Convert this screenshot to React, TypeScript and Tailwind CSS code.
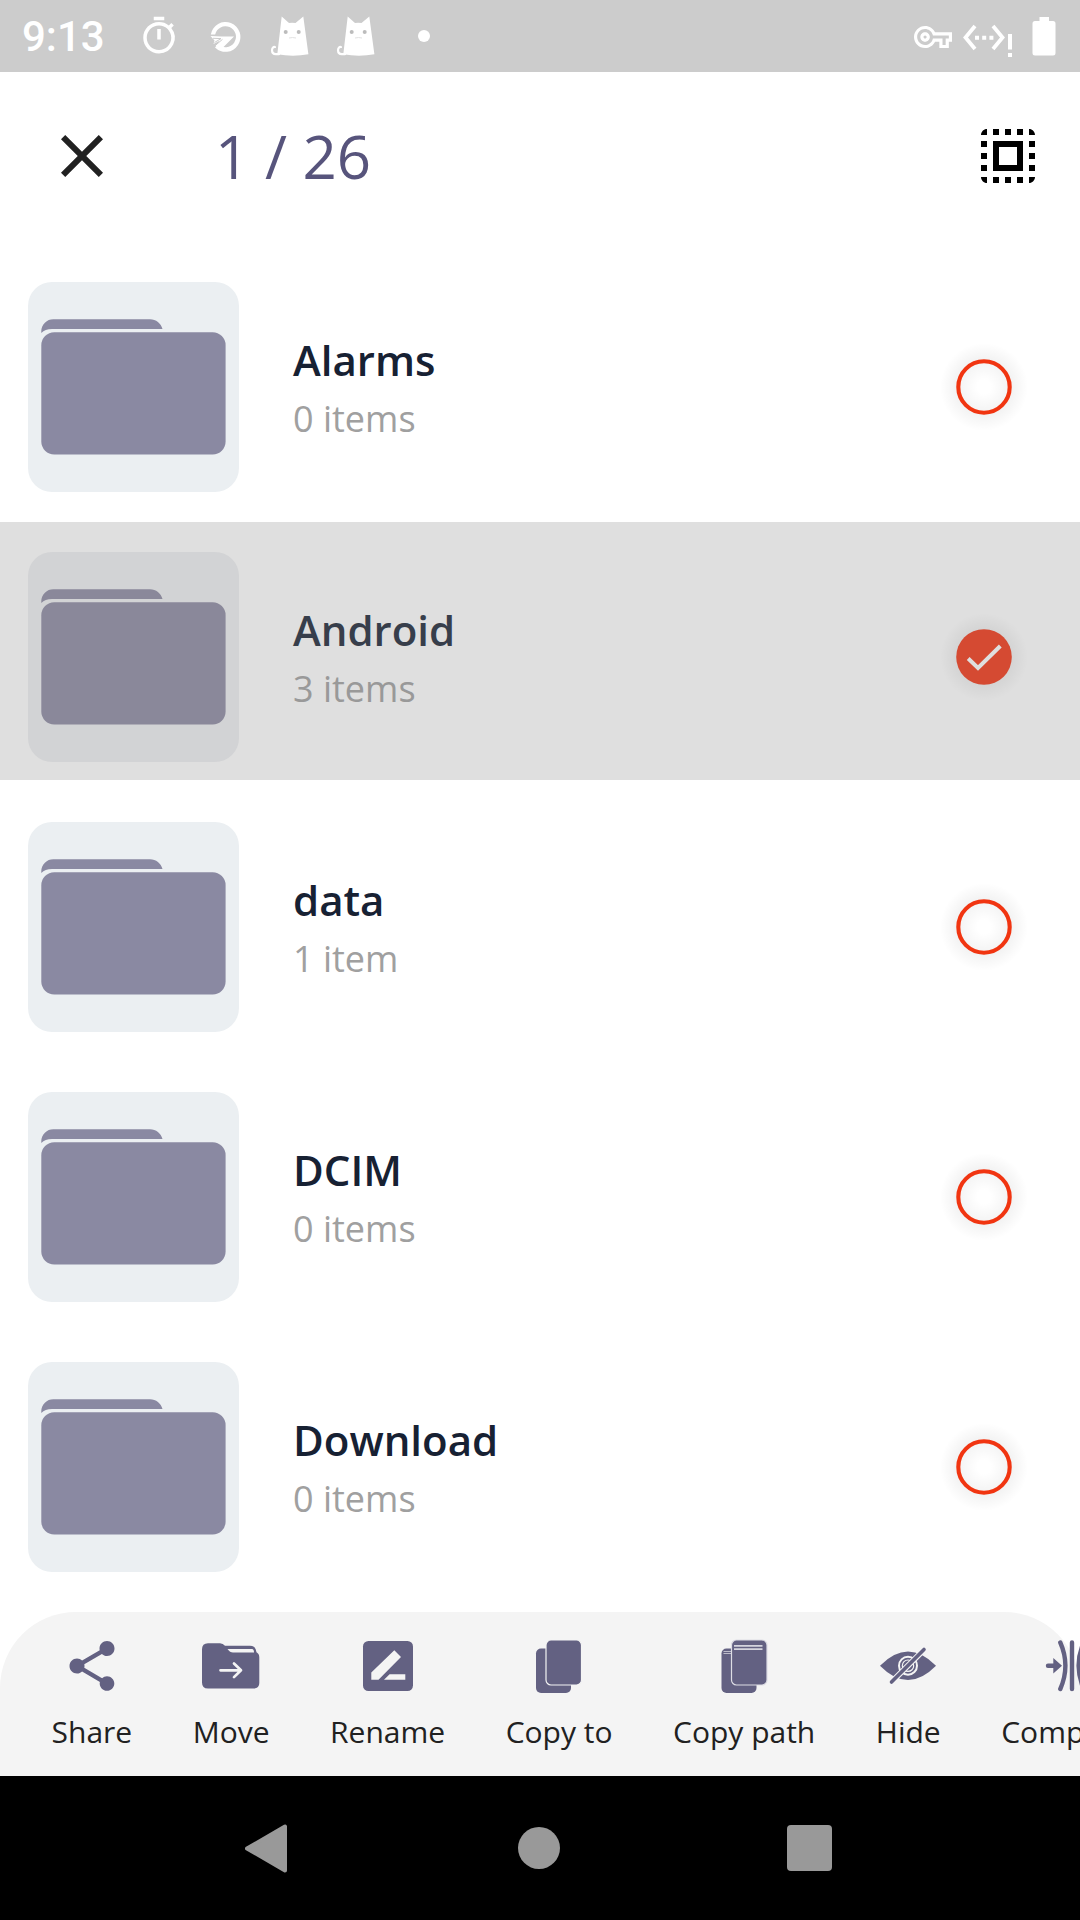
import type { ReactNode } from "react";
import { MdClose, MdSelectAll, MdShare, MdOutlineTimer, MdOutlineVpnKey } from "react-icons/md";

type Folder = { name: string; count: string; selected?: boolean };

const folders: Folder[] = [
  { name: "Alarms", count: "0 items" },
  { name: "Android", count: "3 items", selected: true },
  { name: "data", count: "1 item" },
  { name: "DCIM", count: "0 items" },
  { name: "Download", count: "0 items" },
];

function GlobeIcon() {
  return (
    <svg viewBox="0 0 34 34" className="h-[34px] w-[34px] shrink-0 text-white" fill="currentColor">
      <path d="M1.800 15.500A14.900 14.900 0 1 1 6 28.500l3-3.400A10.500 10.500 0 1 0 6.200 15.500Z" />
      <path d="M1.500 17 12.500 17.600h12.500L13.500 29 6.500 27l4.500-5.500-6.500 3.500 1-3.500Z" />
      <path d="M4 19.300 12 19.600 5.500 23.500M13.500 20.300 6.500 26.300" stroke="#ccc" strokeWidth="1" fill="none" />
    </svg>
  );
}

function CatIcon() {
  return (
    <svg viewBox="0 0 39 41" className="h-[41px] w-[39px] shrink-0">
      <path d="M11.700.6 19 7q3.200-.6 6.500 0L33.300.6 38.400 38.300Q23 41 7.300 38.300Z" fill="#fff" />
      <path d="M5 31C1 30.500.8 38 5.800 38.200H9" fill="none" stroke="#fff" strokeWidth="2.200" strokeLinecap="round" />
      <circle cx="15.700" cy="16" r="2" fill="#bcbcbc" />
      <circle cx="28.700" cy="16" r="2" fill="#bcbcbc" />
      <path d="M19 22q3.500-1 7 0" stroke="#e2e2e2" strokeWidth="1" fill="none" />
    </svg>
  );
}

function StatusBar() {
  return (
    <div className="flex h-[72px] shrink-0 items-center bg-[#cccccc] pl-[22px] text-white">
      <span className="mt-[2px] w-[116px] font-['Roboto'] text-[42px] leading-[72px] font-medium">9:13</span>
      <MdOutlineTimer className="h-[42px] w-[42px] shrink-0" />
      <div className="ml-[29px] flex items-center">
        <GlobeIcon />
      </div>
      <div className="ml-[27px] flex gap-[27px]">
        <CatIcon />
        <CatIcon />
      </div>
      <div className="ml-[43px] h-3 w-3 rounded-full bg-white" />
      <div className="mr-6 ml-auto flex items-center">
        <MdOutlineVpnKey className="mt-[2px] h-[38px] w-[38px]" />
        <svg viewBox="0 0 50 34" className="mt-[7px] ml-[10px] h-[34px] w-[50px]" fill="none">
          <path d="M13 3 3.500 14.500 13 26M31 3l9.500 11.500L31 26" stroke="#fff" strokeWidth="3.800" />
          <path d="M13 12.800h4v4h-4zM20.200 12.800h4v4h-4zM27.400 12.800h4v4h-4zM46 11h4v15.500h-4zM46 30h4v4h-4z" fill="#fff" />
        </svg>
        <svg viewBox="0 0 24 39" className="ml-[20px] h-[39px] w-6" fill="#fff">
          <path d="M7.500 0h9.500v4h4a2.500 2.500 0 0 1 2.500 2.500V36a2.500 2.500 0 0 1-2.500 2.500H3A2.500 2.500 0 0 1 .5 36V6.500A2.500 2.500 0 0 1 3 4h4.500Z" />
        </svg>
      </div>
    </div>
  );
}

function Header() {
  return (
    <header className="flex h-[168px] shrink-0 items-center px-9">
      <MdClose className="ml-[10px] h-[72px] w-[72px] text-[#212121]" />
      <h1 className="ml-[97px] text-[60px] leading-[82px] text-[#57547c]">1 / 26</h1>
      <MdSelectAll className="ml-auto h-[72px] w-[72px] text-black" />
    </header>
  );
}

function FolderTile({ selected }: { selected?: boolean }) {
  return (
    <div className={`h-[210px] w-[211px] rounded-[24px] ${selected ? "bg-[#d2d3d5]" : "bg-[#ebeff2]"}`}>
      <svg viewBox="0 0 211 210" className={`h-[210px] w-[211px] ${selected ? "text-[#8a889a]" : "text-[#8a89a2]"}`} fill="currentColor">
        <rect x="13.300" y="50.300" width="184.300" height="122.300" rx="13" />
        <path d="M13.300 51V49a12 12 0 0 1 12-11.700H122c6 0 11 4 12.500 9.700H24q-7 0-10.700 4Z" />
      </svg>
    </div>
  );
}

function SelectionMark({ selected }: { selected?: boolean }) {
  return (
    <svg viewBox="0 0 96 96" className="h-24 w-24">
      <defs>
        <radialGradient id={selected ? "halo-on" : "halo-off"}>
          <stop offset="0" stopColor="#000" stopOpacity="0" />
          <stop offset="0.150" stopColor="#000" stopOpacity="0" />
          <stop offset="0.620" stopColor="#000" stopOpacity="0.050" />
          <stop offset="1" stopColor="#000" stopOpacity="0" />
        </radialGradient>
      </defs>
      <circle cx="48" cy="48" r="44" fill={selected ? "url(#halo-on)" : "url(#halo-off)"} />
      {selected ? (
        <>
          <circle cx="48" cy="48" r="27.800" fill="#d54a32" />
          <path d="M32.200 49.500 42 59 64.300 37" fill="none" stroke="#dfdfdf" strokeWidth="4" strokeLinejoin="miter" />
        </>
      ) : (
        <circle cx="48" cy="48" r="25.700" fill="none" stroke="#f13511" strokeWidth="4.100" />
      )}
    </svg>
  );
}

function FolderRow({ name, count, selected }: Folder) {
  return (
    <li className={`flex h-[258px] shrink-0 items-start pl-7 ${selected ? "bg-[#dfdfdf]" : ""}`}>
      <div className="mt-[30px]">
        <FolderTile selected={selected} />
      </div>
      <div className="mt-[79px] ml-[54px] grow">
        <p className={`text-[42px] leading-[57px] font-semibold ${selected ? "text-[#373e4b]" : "text-[#172133]"}`}>{name}</p>
        <p className={`mt-[6px] text-[36px] leading-[49px] ${selected ? "text-[#999999]" : "text-[#a0a0a0]"}`}>{count}</p>
      </div>
      <div className="mt-[87px] mr-12">
        <SelectionMark selected={selected} />
      </div>
    </li>
  );
}

function ToolIcon({ children }: { children: ReactNode }) {
  return (
    <svg viewBox="0 0 60 60" className="h-[60px] w-[60px]" fill="#636182">
      {children}
    </svg>
  );
}

const actions: { label: string; icon: ReactNode }[] = [
  { label: "Share", icon: <MdShare className="h-[60px] w-[60px] text-[#636182]" /> },
  {
    label: "Move",
    icon: (
      <ToolIcon>
        <path d="M7 7.300h12q3 0 5 2.500H49q6 0 6.500 6.500 2.800 1.500 2.800 5V47q0 5.500-5.500 5.500H7q-6 0-6-6V13.300q0-6 6-6Z" />
        <path d="M26.500 13h24.500q2 0 2 3.600H32q-3 0-5.500-3.600Z" fill="#f4f4f4" />
        <path d="M19.500 34.300h20.500M33 27.500l7 6.800-7 6.800" fill="none" stroke="#f4f4f4" strokeWidth="2.700" strokeLinecap="round" strokeLinejoin="round" />
      </ToolIcon>
    ),
  },
  {
    label: "Rename",
    icon: (
      <ToolIcon>
        <rect x="5" y="5" width="50" height="50" rx="5.500" />
        <path d="M13.300 43.800v-7.300L36.300 14.200 43 21 20.500 43.800ZM26 43.800l5.600-5.600h15.700v5.600Z" fill="#f4f4f4" />
      </ToolIcon>
    ),
  },
  {
    label: "Copy to",
    icon: (
      <ToolIcon>
        <rect x="7" y="12.500" width="35" height="44.500" rx="5" />
        <rect x="17" y="4" width="35.500" height="45" rx="5" stroke="#f4f4f4" strokeWidth="1.200" />
      </ToolIcon>
    ),
  },
  {
    label: "Copy path",
    icon: (
      <ToolIcon>
        <rect x="7.500" y="12.500" width="35" height="44.500" rx="5" />
        <path d="M9.500 15.500h9M9.500 17.500h9" stroke="#bdbcca" strokeWidth="1.200" />
        <rect x="17.500" y="4" width="35.500" height="45" rx="5" stroke="#dddde4" strokeWidth="1.200" />
        <path d="M20 9.800h28.500M20 13.200h28.500" stroke="#d5d5de" strokeWidth="1.700" />
      </ToolIcon>
    ),
  },
  {
    label: "Hide",
    icon: (
      <ToolIcon>
        <path d="M2 29.700Q16 15.500 30 15.500T58 29.700Q44 44 30 44T2 29.700Z" />
        <circle cx="30" cy="29.700" r="9" fill="none" stroke="#f4f4f4" strokeWidth="2" />
        <circle cx="30" cy="29.700" r="5.700" fill="none" stroke="#f4f4f4" strokeWidth="1.200" />
        <path d="M13.500 46 46.500 13.300" stroke="#f4f4f4" strokeWidth="5.800" />
        <path d="M13.500 46 46 13.500" stroke="#636182" strokeWidth="3.600" strokeLinecap="round" />
      </ToolIcon>
    ),
  },
  {
    label: "Compress",
    icon: (
      <ToolIcon>
        <g fill="none" stroke="#636182" strokeWidth="4.400" strokeLinecap="round">
          <path d="M18.300 6.500Q28.500 29.500 18.300 53M30 6.500V53M41.700 6.500Q31.500 29.500 41.700 53M6 29.700h6M54 29.700h-6" />
        </g>
        <path d="M11.300 22 20 29.700 11.300 37.500ZM48.700 22 40 29.700l8.700 7.800Z" />
      </ToolIcon>
    ),
  },
];

function ActionBar() {
  return (
    <div className="flex h-[164px] shrink-0 items-start gap-[60.500px] rounded-t-[76px] bg-[#f4f4f4] pt-6 pl-[51.600px]">
      {actions.map(({ label, icon }) => (
        <button key={label} className="flex shrink-0 flex-col items-center">
          {icon}
          <span className="mt-[15px] text-[30px] leading-[41px] text-[#212121]">{label}</span>
        </button>
      ))}
    </div>
  );
}

function NavigationBar() {
  return (
    <nav className="flex h-36 shrink-0 items-center bg-black pl-[245px]">
      <svg viewBox="0 0 43 49" className="h-[49px] w-[43px]">
        <path d="M2 24.500 40 2.500v44Z" fill="#999" stroke="#999" strokeWidth="4" strokeLinejoin="round" />
      </svg>
      <div className="ml-[230px] h-[42px] w-[42px] rounded-full bg-[#999]" />
      <div className="ml-[227px] h-[46px] w-[45px] rounded-[4px] bg-[#999]" />
    </nav>
  );
}

export default function App() {
  return (
    <div className="flex h-[1920px] w-[1080px] flex-col overflow-hidden bg-white font-['Open_Sans',sans-serif]">
      <StatusBar />
      <Header />
      <ul className="flex h-[1372px] shrink-0 flex-col gap-3 pt-3">
        {folders.map((folder) => (
          <FolderRow key={folder.name} {...folder} />
        ))}
      </ul>
      <ActionBar />
      <NavigationBar />
    </div>
  );
}
